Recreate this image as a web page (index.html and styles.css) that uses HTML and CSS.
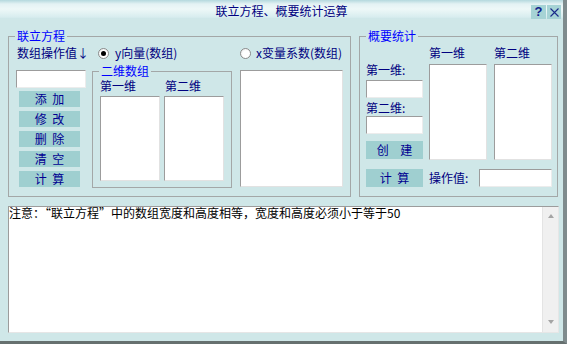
FILE: index.html
```html
<!DOCTYPE html>
<html lang="zh-CN">
<head>
<meta charset="utf-8">
<title>联立方程、概要统计运算</title>
<link rel="stylesheet" href="styles.css">
</head>
<body>
<div class="window">
  <div class="titlebar">
    <div class="title">联立方程、概要统计运算</div>
    <div class="caption-btns">
      <span class="cap-btn help">?</span>
      <span class="cap-btn close"><svg width="11" height="11" viewBox="0 0 11 11"><path d="M1.5 1.5 L9.5 9.5 M9.5 1.5 L1.5 9.5" stroke="#1a2a8a" stroke-width="1.1" fill="none"/></svg></span>
    </div>
  </div>
  <div class="client">
    <div class="groups">
      <fieldset class="group group-eq">
        <legend>联立方程</legend>
        <div class="eq-body">
          <div class="op-label">数组操作值↓</div>
          <div class="radio radio-y"><span class="radio-dot checked"></span><span>y向量(数组)</span></div>
          <div class="radio radio-x"><span class="radio-dot"></span><span>x变量系数(数组)</span></div>
          <div class="ops">
            <div class="edit edit-op"></div>
            <div class="btn btn-op">添 加</div>
            <div class="btn btn-op">修 改</div>
            <div class="btn btn-op">删 除</div>
            <div class="btn btn-op">清 空</div>
            <div class="btn btn-op">计 算</div>
          </div>
          <fieldset class="group matrix">
            <legend>二维数组</legend>
            <div class="matrix-body">
              <div class="mcol">
                <div class="col-head">第一维</div>
                <div class="listbox list-m"></div>
              </div>
              <div class="mcol">
                <div class="col-head second">第二维</div>
                <div class="listbox list-m"></div>
              </div>
            </div>
          </fieldset>
          <div class="listbox list-coef"></div>
        </div>
      </fieldset>

      <fieldset class="group group-stat">
        <legend>概要统计</legend>
        <div class="stat-body">
          <div class="stat-a">
            <div class="lbl">第一维:</div>
            <div class="edit edit-dim1"></div>
            <div class="lbl lbl2">第二维:</div>
            <div class="edit edit-dim2"></div>
            <div class="btn btn-stat btn-create">创  建</div>
            <div class="btn btn-stat btn-calc">计 算</div>
          </div>
          <div class="col-head stat-head">第一维</div>
          <div class="col-head stat-head">第二维</div>
          <div class="listbox list-s"></div>
          <div class="listbox list-s"></div>
          <div class="op-row">
            <span class="op-val">操作值:</span>
            <div class="edit edit-val"></div>
          </div>
        </div>
      </fieldset>
    </div>

    <div class="memo">
      <div class="memo-text">注意：<span class="fw">“</span>联立方程<span class="fw">”</span>中的数组宽度和高度相等，宽度和高度必须小于等于50</div>
      <div class="scrollbar">
        <span class="arrow up"></span>
        <span class="arrow down"></span>
      </div>
    </div>
  </div>
</div>
</body>
</html>
```

FILE: styles.css
```css
* {
  box-sizing: border-box;
}

html,
body {
  margin: 0;
  padding: 0;
}

body {
  width: 567px;
  height: 344px;
  overflow: hidden;
  font-family: "Noto Sans CJK SC", "Noto Sans", sans-serif;
  font-size: 12px;
  line-height: 14px;
  color: #000080;
}

.window {
  width: 567px;
  height: 344px;
  background: #cfe7e8;
  border-right: 4px solid #7f8b8d;
  border-bottom: 3px solid #66706f;
  display: flex;
  flex-direction: column;
}

/* ---------- title bar ---------- */
.titlebar {
  height: 19px;
  flex: none;
  display: grid;
  grid-template-columns: 1fr auto 1fr;
  background: linear-gradient(180deg, #b4d8de 0px, #e4f2f4 4px, #eef8f8 9px, #d8edef 17px, #cbe5e7 19px);
}

.title {
  grid-column: 2;
  padding-top: 4px;
  color: #000080;
  white-space: nowrap;
}

.caption-btns {
  grid-column: 3;
  justify-self: end;
  display: flex;
  gap: 1px;
  padding-top: 5px;
  margin-right: 2px;
}

.cap-btn {
  width: 15px;
  height: 14px;
  background: #a6d3d5;
  display: flex;
  align-items: center;
  justify-content: center;
}

.cap-btn.help {
  font-family: "Liberation Sans", sans-serif;
  font-weight: bold;
  font-size: 13px;
  color: #10208a;
}

.cap-btn.close {
  width: 14px;
}

/* ---------- client ---------- */
.client {
  padding: 10px 0 0 8px;
}

.groups {
  display: flex;
  gap: 8px;
}

fieldset.group {
  margin: 0;
  padding: 0;
  min-width: 0;
  border: 1px solid #a3a7a7;
}

fieldset.group > legend {
  padding: 0 2px;
  margin-left: 6px;
  line-height: 14px;
  color: #0000ff;
}

.group-eq {
  width: 343px;
}

.group-stat {
  width: 199px;
}

.group-stat > legend {
  margin-left: 5px;
}

/* left group */
.eq-body {
  padding: 0 7px 8px 7px;
  display: grid;
  grid-template-columns: 76px 148px 103px;
  grid-template-rows: 21px auto;
  align-items: start;
}

.op-label {
  padding: 3px 0 0 1px;
  white-space: nowrap;
}

.radio {
  display: flex;
  align-items: center;
  padding-top: 3px;
  white-space: nowrap;
}

.radio-y {
  padding-left: 6px;
  gap: 6px;
}

.radio-x {
  gap: 5px;
}

.radio-dot {
  width: 11px;
  height: 11px;
  flex: none;
  border-radius: 50%;
  background: radial-gradient(circle at 60% 60%, #ffffff 0, #ffffff 45%, #e6e6e6 100%);
  border: 1px solid #8c8c8c;
  display: flex;
  align-items: center;
  justify-content: center;
}

.radio-dot.checked::after {
  content: "";
  width: 5px;
  height: 5px;
  border-radius: 50%;
  background: #000;
}

.ops {
  display: flex;
  flex-direction: column;
  gap: 4px;
}

.edit {
  background: #fff;
  border-top: 1px solid #9c9c9c;
  border-left: 1px solid #9c9c9c;
  border-right: 1px solid #ececec;
  border-bottom: 1px solid #ececec;
}

.edit-op {
  width: 70px;
  height: 18px;
  margin-top: 6px;
  margin-bottom: -1px;
}

.btn {
  background: #9fcfd0;
  color: #000090;
  display: flex;
  align-items: center;
  justify-content: center;
  white-space: pre;
  word-spacing: 3px;
}

.btn-op {
  width: 61px;
  height: 16px;
  margin-left: 3px;
}

.listbox {
  background: #fff;
  border-top: 1px solid #9c9c9c;
  border-left: 1px solid #9c9c9c;
  border-right: 1px solid #e2e2e2;
  border-bottom: 1px solid #e2e2e2;
}

.matrix {
  width: 140px;
}

.matrix > legend {
  margin-left: 5px;
}

.matrix-body {
  padding: 0 7px 6px 7px;
  display: flex;
  gap: 4px;
}

.mcol {
  width: 60px;
}

.col-head {
  height: 18px;
  padding-top: 1px;
  white-space: nowrap;
}

.col-head.second {
  padding-left: 1px;
}

.list-m {
  width: 60px;
  height: 85px;
}

.list-coef {
  width: 103px;
  height: 117px;
  margin-top: 6px;
}

/* right group */
.stat-body {
  padding: 0 5px 9px 6px;
  display: grid;
  grid-template-columns: 63px 65px 58px;
  grid-template-rows: 21px 96px auto;
}

.stat-a {
  grid-row: 1 / 4;
  width: 57px;
  display: flex;
  flex-direction: column;
  padding-top: 20px;
}

.lbl {
  white-space: nowrap;
}

.edit-dim1 {
  height: 18px;
  margin-top: 3px;
}

.lbl2 {
  margin-top: 3px;
}

.edit-dim2 {
  height: 18px;
  margin-top: 1px;
}

.btn-stat {
  height: 18px;
}

.btn-create {
  margin-top: 7px;
}

.btn-calc {
  margin-top: 10px;
}

.stat-head {
  padding-top: 3px;
}

.list-s {
  width: 58px;
  height: 96px;
}

.op-row {
  grid-column: 2 / 4;
  display: flex;
  align-items: center;
  margin-top: 8px;
}

.op-val {
  white-space: nowrap;
}

.edit-val {
  width: 73px;
  height: 18px;
  margin-left: auto;
}

/* ---------- memo ---------- */
.memo {
  margin-top: 9px;
  width: 551px;
  height: 127px;
  background: #fff;
  border-top: 1px solid #9c9c9c;
  border-left: 1px solid #9c9c9c;
  border-right: 1px solid #e6e6e6;
  border-bottom: 1px solid #e6e6e6;
  display: flex;
}

.memo-text {
  flex: 1;
  color: #000;
  line-height: 14px;
  margin-top: -1px;
  white-space: nowrap;
}

.fw {
  font-feature-settings: "fwid" 1;
}

.scrollbar {
  width: 16px;
  flex: none;
  background: #f0f0f0;
  border-left: 1px solid #e4e4e4;
  display: flex;
  flex-direction: column;
  align-items: center;
  justify-content: space-between;
  padding: 7px 0 8px;
}

.arrow {
  width: 0;
  height: 0;
  border-left: 3.5px solid transparent;
  border-right: 3.5px solid transparent;
}

.arrow.up {
  border-bottom: 4px solid #a4a4a4;
}

.arrow.down {
  border-top: 4px solid #a4a4a4;
}
```
